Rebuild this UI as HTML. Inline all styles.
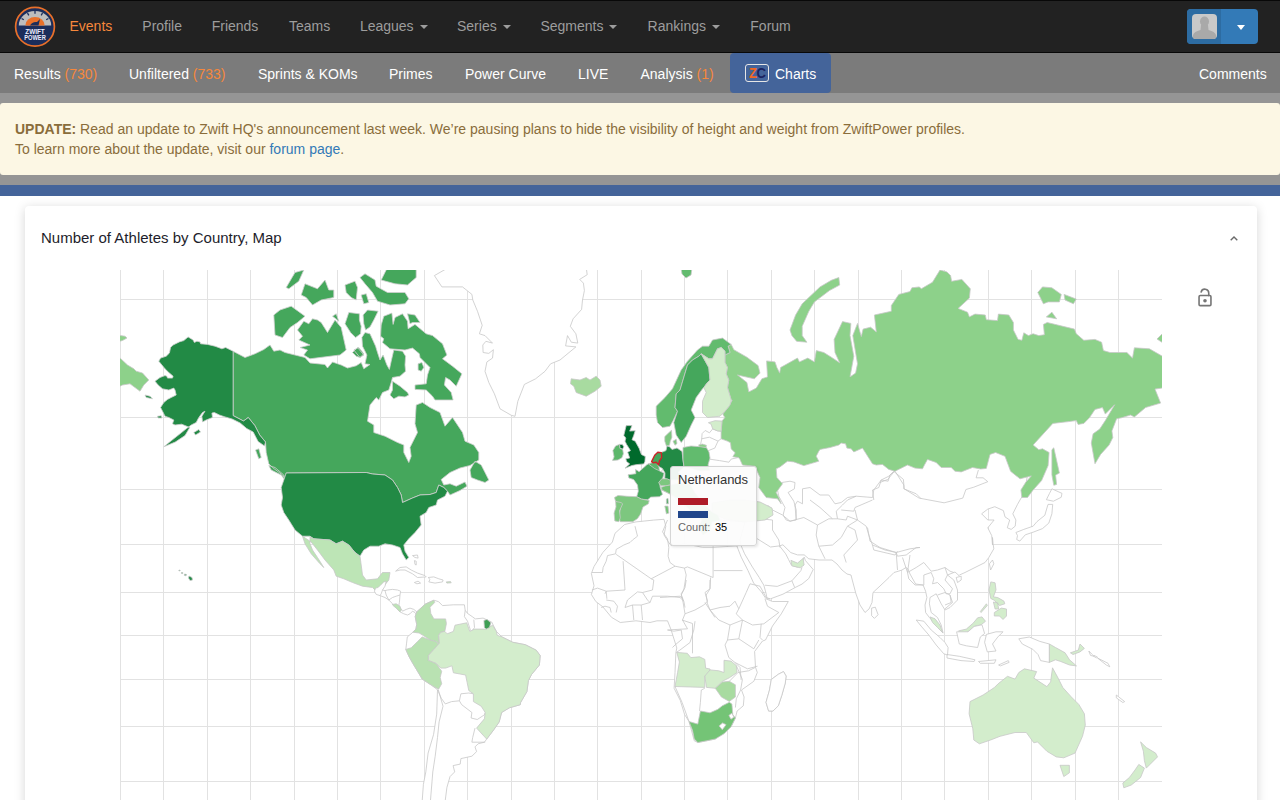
<!DOCTYPE html>
<html><head><meta charset="utf-8">
<style>
*{box-sizing:border-box;margin:0;padding:0}
html,body{width:1280px;height:800px;overflow:hidden;background:#fff;font-family:"Liberation Sans",sans-serif}
.abs{position:absolute;white-space:nowrap}
#nav{position:absolute;left:0;top:0;width:1280px;height:53px;background:#222;border-top:1px solid #080808;border-bottom:1px solid #080808}
.nl{position:absolute;top:17.6px;font-size:14px;line-height:17px;color:#9d9d9d}
.caret{display:inline-block;width:0;height:0;border-top:4px solid #9d9d9d;border-left:4px solid transparent;border-right:4px solid transparent;vertical-align:middle;margin-left:6px;position:relative;top:0px}
#sub{position:absolute;left:0;top:53px;width:1280px;height:40px;background:#7b7b7b}
.sl{position:absolute;top:65.5px;font-size:14px;line-height:17px;color:#fff}
.or{color:#f6883c}
#strip1{position:absolute;left:0;top:93px;width:1280px;height:92px;background:#959595}
#alert{position:absolute;left:0;top:103px;width:1280px;height:72px;background:#fcf7e4;border-radius:3px;color:#8a6d3b;font-size:14px;line-height:20px;padding:16px 15px}
#blue{position:absolute;left:0;top:185px;width:1280px;height:11px;background:#44649a}
#card{position:absolute;left:25px;top:206px;width:1232px;height:620px;background:#fff;border-radius:4px;box-shadow:0 2px 11px rgba(0,0,0,.17)}
</style></head><body>
<div id="nav">
 <svg class="abs" style="left:13px;top:4px" width="44" height="44" viewBox="0 0 44 44">
  <circle cx="22" cy="21.8" r="19.4" fill="#1b2d5b" stroke="#e8702a" stroke-width="1.7"/>
  <path d="M5.8 20.5 A16.2 14.5 0 0 1 38.2 20.5 Z" fill="#bdbdbd"/>
  <path d="M12.3 20.5 A9.7 8.5 0 0 1 31.7 20.5 Z" fill="#e8702a"/>
  <path d="M17 20.5 Q19 16.5 24 17 L27 14 L25.5 20.5 Z" fill="#1b2d5b"/>
  <g stroke="#1b2d5b" stroke-width="1.3"><path d="M22 6 V8.8"/><path d="M14.5 8 L15.8 10.4"/><path d="M29.5 8 L28.2 10.4"/><path d="M8.6 13.5 L10.8 14.8"/><path d="M35.4 13.5 L33.2 14.8"/></g>
  <text x="22" y="29.3" font-family="Liberation Sans" font-weight="bold" font-size="6.8" fill="#eef" text-anchor="middle" textLength="19.5" lengthAdjust="spacingAndGlyphs">ZWIFT</text>
  <text x="22" y="35" font-family="Liberation Sans" font-weight="bold" font-size="6.8" fill="#eef" text-anchor="middle" textLength="21.5" lengthAdjust="spacingAndGlyphs">POWER</text>
 </svg>
</div>
<div class="nl abs" style="left:69.5px;color:#f6883c">Events</div>
<div class="nl abs" style="left:142.3px">Profile</div>
<div class="nl abs" style="left:211.7px">Friends</div>
<div class="nl abs" style="left:289px">Teams</div>
<div class="nl abs" style="left:359.9px">Leagues<span class="caret"></span></div>
<div class="nl abs" style="left:457px">Series<span class="caret"></span></div>
<div class="nl abs" style="left:540.4px">Segments<span class="caret"></span></div>
<div class="nl abs" style="left:647.6px">Rankings<span class="caret"></span></div>
<div class="nl abs" style="left:750.3px">Forum</div>
<div class="abs" style="left:1187px;top:9px;width:71px;height:35px;background:#337ab7;border-radius:4px;overflow:hidden">
 <div class="abs" style="left:0;top:0;width:34px;height:35px;background:#2d6ca2"></div>
 <div class="abs" style="left:5px;top:5px;width:25px;height:25px;background:#c9c9c9;border-radius:4px;overflow:hidden">
  <svg width="25" height="25" viewBox="0 0 25 25"><ellipse cx="12.5" cy="7.5" rx="4.5" ry="5" fill="#a9a9a9"/><path d="M9 11 L16 11 L16.5 16 Q23 17.5 24 21 L24 25 L1 25 L1 21 Q2 17.5 8.5 16 Z" fill="#a9a9a9"/></svg>
 </div>
 <div class="abs" style="left:50px;top:16px;width:0;height:0;border-top:5px solid #fff;border-left:4.5px solid transparent;border-right:4.5px solid transparent"></div>
</div>
<div id="sub"></div>
<div class="sl abs" style="left:14px">Results <span class="or">(730)</span></div>
<div class="sl abs" style="left:129px">Unfiltered <span class="or">(733)</span></div>
<div class="sl abs" style="left:258px">Sprints &amp; KOMs</div>
<div class="sl abs" style="left:389px">Primes</div>
<div class="sl abs" style="left:465px">Power Curve</div>
<div class="sl abs" style="left:578px">LIVE</div>
<div class="sl abs" style="left:640.5px">Analysis <span class="or">(1)</span></div>
<div class="abs" style="left:730px;top:53px;width:101px;height:40px;background:#44649a;border-radius:4px"></div>
<div class="abs" style="left:745px;top:63.5px;width:24px;height:18.5px;border:1.3px solid #e6e6e6;border-radius:3px;background:#44649a"></div>
<div class="abs" style="left:748.5px;top:64px;font-size:15px;line-height:17px;font-weight:bold;letter-spacing:-0.5px;transform:scaleX(0.87);transform-origin:0 0"><span style="color:#f26722">Z</span><span style="color:#1b2360">C</span></div>
<div class="sl abs" style="left:775px">Charts</div>
<div class="sl abs" style="left:1199px">Comments</div>
<div id="strip1"></div>
<div id="alert"><b>UPDATE:</b> Read an update to Zwift HQ's announcement last week. We’re pausing plans to hide the visibility of height and weight from ZwiftPower profiles.<br>To learn more about the update, visit our <span style="color:#337ab7">forum page</span>.</div>
<div id="blue"></div>
<div id="card"></div>
<div class="abs" style="left:41px;top:229px;font-size:15px;line-height:17px;color:#1d1d2b">Number of Athletes by Country, Map</div>
<svg class="abs" style="left:1227.5px;top:232.5px" width="12" height="10" viewBox="0 0 12 10"><path d="M2.7 7.2 L6 3.9 L9.3 7.2" fill="none" stroke="#6a6a6a" stroke-width="1.4"/></svg>
<div id="map"><svg class="abs" style="left:0;top:0" width="1280" height="800" viewBox="0 0 1280 800"><defs><clipPath id="mc"><rect x="120" y="270" width="1042" height="530"/></clipPath></defs><g clip-path="url(#mc)">
<path d="M120.5 270V800 M163.5 270V800 M207.5 270V800 M250.5 270V800 M294.5 270V800 M337.5 270V800 M380.5 270V800 M424.5 270V800 M467.5 270V800 M511.5 270V800 M554.5 270V800 M597.5 270V800 M641.5 270V800 M684.5 270V800 M727.5 270V800 M771.5 270V800 M814.5 270V800 M858.5 270V800 M901.5 270V800 M944.5 270V800 M988.5 270V800 M1031.5 270V800 M1075.5 270V800 M1118.5 270V800 M120 299.5H1162 M120 417.5H1162 M120 489.5H1162 M120 544.5H1162 M120 592.5H1162 M120 635.5H1162 M120 679.5H1162 M120 726.5H1162 M120 781.5H1162" stroke="#e2e2e2" stroke-width="1" fill="none"/>
<path d="M233.0 351.2 245.0 357.5 255.0 353.8 263.8 349.5 270.0 345.0 273.8 351.2 280.0 350.0 285.0 352.5 295.0 355.0 305.0 357.5 310.0 363.0 325.0 364.5 327.5 368.0 332.5 362.0 341.2 365.0 347.5 368.0 356.2 365.8 361.2 362.5 363.8 368.8 370.0 364.5 365.0 363.8 366.9 355.0 362.5 346.2 361.9 337.5 365.0 332.5 370.0 333.8 375.6 346.2 377.5 352.5 380.0 360.0 383.1 355.0 386.9 365.0 389.4 369.4 391.2 361.2 393.8 350.0 402.5 351.2 405.6 356.2 405.0 365.0 405.6 371.2 400.0 376.2 392.5 377.5 391.2 382.5 388.8 390.0 382.5 392.5 378.8 400.0 376.2 397.5 370.0 405.0 367.5 421.2 373.8 425.0 373.8 432.5 385.0 436.2 397.5 442.5 403.8 445.0 403.8 452.5 408.8 462.5 411.2 456.2 410.0 447.5 417.5 432.5 415.0 423.8 416.2 405.0 422.5 402.5 430.0 407.5 440.0 412.5 445.0 426.2 452.5 417.5 462.5 432.5 465.0 441.2 473.8 445.0 478.8 452.5 478.8 460.0 478.8 460.0 470.0 465.5 460.0 468.0 450.0 472.5 441.2 479.5 443.8 485.0 450.0 483.8 456.2 486.2 465.0 482.0 467.0 486.2 460.0 490.5 450.0 495.0 447.5 491.2 443.8 487.5 438.8 485.0 436.2 492.5 430.0 494.5 420.0 495.0 412.5 498.0 402.5 502.5 401.2 495.0 397.5 487.5 392.5 480.0 385.0 475.0 372.5 474.0 366.2 472.5 286.2 473.0 286.2 480.0 282.5 475.0 272.5 467.5 268.8 463.8 266.2 452.5 265.5 442.0 259.7 435.0 254.8 425.5 248.3 417.5 243.5 421.0 233.1 415.5ZM381.2 325.0 383.8 316.2 391.9 313.1 393.1 324.4 395.0 317.5 402.5 313.8 407.5 321.2 408.1 328.8 415.0 324.4 426.2 333.8 432.5 335.6 442.5 343.8 446.9 355.0 442.5 358.8 452.5 366.2 461.9 373.8 456.2 386.2 450.0 380.0 445.6 377.5 444.4 385.0 451.2 392.5 453.1 400.0 435.0 400.0 432.5 396.2 426.2 390.0 415.0 389.4 415.0 385.0 426.2 383.8 427.5 375.0 430.0 367.5 420.0 357.5 419.4 353.8 412.5 348.1 405.0 350.0 390.0 348.8 382.5 342.5 383.8 338.8 380.6 336.2ZM392.5 381.2 400.0 386.2 407.5 392.5 408.8 395.0 405.0 396.9 398.8 396.2 393.8 398.8 390.0 395.0 392.5 390.0ZM418.1 363.8 421.9 362.5 423.8 367.5 421.2 371.2 418.1 370.0ZM345.0 323.8 348.8 312.5 359.4 313.8 359.4 320.0 361.2 326.2 360.6 333.8 355.6 337.5 350.6 332.5ZM363.1 315.0 367.5 310.0 378.1 311.2 373.8 320.0 370.0 326.9 365.6 330.0 363.8 323.8ZM352.5 352.5 357.5 347.5 363.8 355.0 360.0 357.5 356.2 356.2ZM407.5 313.8 415.0 315.0 420.0 322.5 412.5 322.5 410.0 323.8ZM286.2 287.5 295.0 272.5 303.8 270.0 298.8 281.2 288.8 288.8ZM301.2 295.0 305.0 283.8 317.5 288.8 325.0 280.0 328.8 290.0 333.8 290.0 333.8 297.5 321.2 300.0 312.5 305.0 306.2 297.5ZM345.0 285.0 355.0 281.2 357.5 287.5 356.2 300.0 351.2 297.5 346.2 292.5ZM360.0 277.5 365.0 273.8 375.0 280.0 376.2 286.2 387.5 292.5 405.0 292.5 408.8 298.8 405.0 303.8 390.0 305.0 377.5 301.2 372.5 292.5 365.0 283.8ZM361.2 295.0 366.2 293.8 368.8 302.5 363.8 303.8ZM381.2 280.0 386.2 270.0 383.8 260.0 416.2 260.0 416.2 277.5 407.5 285.0 395.0 283.8ZM280.0 310.0 291.2 306.2 305.0 316.2 297.5 322.5 290.0 327.5 282.5 337.5 275.0 335.0 273.8 315.0ZM297.5 330.0 303.8 321.2 308.8 323.8 312.5 318.8 317.5 320.0 321.2 322.5 327.5 332.5 335.0 320.0 341.2 327.5 346.2 350.0 340.0 355.0 320.0 357.5 310.0 358.8 303.8 355.0 307.5 350.0 300.0 347.5 310.0 345.0 298.8 340.0 302.5 336.2ZM332.5 316.2 336.2 313.8 338.8 321.2ZM353.8 350.0 358.8 347.5 363.8 353.8 360.0 357.5ZM268.8 465.5 275.0 467.5 283.8 475.0 285.0 480.0 281.2 475.0 271.2 470.0ZM255.5 450.0 258.8 448.8 261.2 457.5 258.8 458.8ZM470.0 470.0 475.0 461.2 481.2 465.0 485.0 472.5 488.8 480.0 485.0 482.5 477.5 480.0 471.2 477.5Z" fill="#45a75c" stroke="#cfcfcf" stroke-width="0.8" stroke-linejoin="round"/>
<path d="M434.4 275.6 447.5 268.1 586.3 268.1 587.2 274.7 579.7 279.4 583.4 283.1 584.4 290.6 582.5 300.0 581.6 309.4 573.1 318.8 570.3 326.3 575.9 333.8 577.8 343.1 571.3 342.2 567.5 335.6 565.6 345.9 575.9 346.9 560.0 360.0 550.6 363.8 545.0 371.3 535.6 378.8 524.4 384.4 517.8 401.3 515.0 416.3 511.3 415.3 500.0 408.8 494.4 393.8 488.8 382.5 485.0 371.3 486.9 361.9 492.5 358.1 493.4 349.7 488.8 353.4 483.1 352.5 482.8 345.0 485.9 341.3 492.5 343.1 485.0 335.6 479.4 333.8 482.2 325.3 477.5 311.3 472.8 300.0 471.9 294.4 462.5 286.9 441.9 286.9Z" fill="#ffffff" stroke="#c8c8c8" stroke-width="0.8" stroke-linejoin="round"/>
<path d="M286.2 473.0 366.2 472.5 372.5 474.0 385.0 475.0 392.5 480.0 397.5 487.5 401.2 495.0 402.5 502.5 412.5 498.0 420.0 495.0 430.0 494.5 436.2 492.5 438.8 485.0 443.8 487.5 447.5 491.2 445.0 496.2 437.5 500.0 436.2 505.0 428.8 507.5 426.2 512.5 420.0 516.2 421.2 525.0 415.0 532.5 408.8 538.8 403.8 545.0 405.0 551.2 408.8 557.5 406.2 560.0 402.5 553.8 400.0 547.5 392.5 545.0 385.0 543.8 378.8 546.2 370.0 546.2 363.8 550.0 360.0 556.2 355.0 552.5 348.8 545.0 342.5 541.2 336.2 543.8 330.0 540.0 313.8 538.8 310.0 536.2 302.5 536.2 295.0 530.0 288.8 520.0 283.8 512.5 281.2 505.0 282.5 497.5 281.2 487.5 283.8 480.0ZM188.1 336.9 193.1 340.0 194.4 342.5 196.9 341.2 200.0 341.9 200.6 343.8 207.5 344.4 215.0 346.2 221.9 348.8 225.6 347.5 233.1 351.2 233.1 415.6 243.5 421.0 248.3 417.5 254.8 425.5 259.7 435.0 265.5 442.0 264.5 446.0 258.1 441.5 253.2 432.0 246.7 428.5 240.2 423.0 232.1 419.0 225.0 416.9 219.4 415.0 214.4 412.5 211.9 413.1 212.5 417.5 206.2 420.0 202.5 421.9 201.9 416.2 205.0 411.2 202.5 412.5 198.8 417.5 196.2 422.5 191.2 425.0 186.2 428.8 180.0 433.8 171.2 440.8 163.8 446.8 175.2 442.1 185.0 435.6 189.8 427.5 181.7 424.2 175.0 425.0 172.5 423.8 173.8 420.0 168.8 417.5 165.0 416.2 162.5 411.2 160.6 407.5 163.8 402.5 167.5 399.4 171.2 397.5 176.2 395.0 175.0 390.0 173.8 388.1 168.8 390.0 162.5 388.8 158.1 385.0 155.0 381.2 160.0 377.5 165.0 375.6 166.9 376.2 167.5 378.1 172.5 378.1 173.1 376.2 168.8 372.5 165.0 368.8 161.9 365.0 158.8 361.2 160.6 358.1 166.2 356.2 169.4 353.1 170.6 347.5 173.1 345.0 179.4 341.9 183.8 340.6ZM157.5 416.2 161.2 415.8 162.0 418.0 158.0 418.0ZM145.0 395.0 150.0 396.2 152.5 398.8 146.2 397.5ZM193.8 432.5 198.8 429.5 200.5 432.0 195.5 435.0Z" fill="#228a45" stroke="#cfcfcf" stroke-width="0.8" stroke-linejoin="round"/>
<path d="M302.5 536.2 305.0 543.8 311.2 553.8 320.0 563.8 323.8 567.5 317.5 557.5 312.5 550.0 310.0 543.8 310.0 537.0 313.8 538.8 330.0 540.0 336.2 543.8 342.5 541.2 348.8 545.0 355.0 552.5 360.0 556.2 361.2 565.0 362.5 575.0 366.2 580.0 377.5 578.8 382.5 572.5 390.0 572.5 388.8 580.0 383.8 586.2 380.0 590.0 375.0 590.0 372.5 587.5 362.5 586.2 352.5 582.5 343.8 578.8 336.2 576.2 333.8 570.0 325.0 560.0 317.5 550.0 311.2 542.0Z" fill="#bde5b6" stroke="#c8c8c8" stroke-width="0.8" stroke-linejoin="round"/>
<path d="M120.0 358.0 127.5 365.0 133.8 368.8 136.2 371.2 142.5 373.0 148.8 380.0 143.8 385.0 140.0 391.2 135.0 387.5 130.0 383.8 122.5 385.0 120.0 386.2 115.0 386.2 115.0 358.0ZM120.0 335.5 125.0 336.2 127.0 338.0 122.5 340.5 120.0 341.2 115.0 341.2 115.0 335.5Z" fill="#8dd18a" stroke="#c8c8c8" stroke-width="0.8" stroke-linejoin="round"/>
<path d="M374.4 591.2 376.2 594.4 380.0 595.6 385.0 597.5 388.8 600.0 391.9 603.1 393.1 605.0 396.2 608.1 400.0 611.9 403.8 613.8 407.5 615.0 410.0 613.8 412.5 611.2 415.0 612.5 416.9 615.0 418.1 613.1 416.9 611.9 413.8 609.4 410.0 608.1 406.2 609.4 402.5 611.2 401.2 608.8 400.0 608.1 398.8 605.6 399.4 602.5 400.0 595.0 400.6 591.2 397.5 590.0 392.5 589.4 387.5 590.0 385.0 590.6 382.5 590.0 385.0 586.2 386.2 581.2 383.8 581.9 381.2 584.4 378.1 587.5 375.6 588.1Z" fill="#ffffff" stroke="#c8c8c8" stroke-width="0.8" stroke-linejoin="round"/>
<path d="M382.5 590.0 381.2 593.8 380.0 595.6M385.0 590.6 386.2 595.0 388.8 600.0M388.8 600.0 392.5 597.5 396.2 596.2 400.0 595.0" fill="none" stroke="#c8c8c8" stroke-width="0.8"/>
<path d="M392.5 604.4 396.2 603.8 400.0 606.2 401.2 610.0 400.0 611.9 396.2 608.1 393.1 605.6Z" fill="#bde5b6" stroke="#c8c8c8" stroke-width="0.8" stroke-linejoin="round"/>
<path d="M395.6 571.2 400.0 567.5 406.2 566.9 411.2 570.0 417.5 573.1 425.0 575.6 426.2 576.9 417.5 577.5 412.5 573.8 405.0 570.0 400.0 570.0ZM414.4 582.5 418.1 581.2 420.6 583.1 416.9 583.8ZM428.1 577.5 433.8 576.9 438.8 578.8 443.1 580.0 442.5 581.9 435.0 583.1 428.8 581.9 430.0 579.4ZM412.5 555.6 417.5 555.0 418.1 558.1 415.0 557.5ZM414.4 560.6 416.2 561.2 416.2 565.0 415.0 564.4Z" fill="#ffffff" stroke="#c8c8c8" stroke-width="0.8" stroke-linejoin="round"/>
<path d="M446.2 581.9 450.6 581.6 451.2 582.8 446.9 583.1Z" fill="#bde5b6" stroke="#c8c8c8" stroke-width="0.8" stroke-linejoin="round"/>
<path d="M416.7 611.9 425.3 604.1 433.9 600.2 438.6 601.7 442.5 605.6 453.4 604.8 464.4 604.8 465.2 610.3 467.5 613.4 472.2 616.6 475.3 618.9 483.1 618.1 491.7 622.0 496.4 631.4 501.9 636.9 512.8 642.3 525.3 644.7 536.2 650.2 540.2 655.6 539.4 665.0 531.6 674.4 528.4 680.6 526.9 691.6 520.6 702.5 520.3 704.7 509.4 707.8 501.6 712.5 499.2 721.9 493.8 729.7 486.7 739.1 484.4 742.2 478.1 743.8 475.0 746.9 476.6 751.6 471.9 756.2 460.9 758.6 460.2 764.1 453.1 765.6 454.7 771.9 450.0 776.6 446.9 787.5 445.3 800.0 445.3 804.7 421.9 804.7 423.4 784.4 425.8 771.9 428.1 753.1 433.6 734.4 436.7 714.1 437.5 689.8 431.6 685.3 422.2 679.1 417.5 671.2 412.8 663.4 408.9 656.4 405.8 649.4 406.6 643.1 407.3 636.9 412.0 633.0 412.8 632.2 415.9 629.1 416.7 624.4 415.2 616.6Z" fill="#ffffff" stroke="#c8c8c8" stroke-width="0.8" stroke-linejoin="round"/>
<path d="M465.2 610.3 464.4 616.6 467.5 621.2 470.6 630.6M473.8 619.7 474.5 627.5 472.2 630.6M437.5 689.8 441.4 698.4 445.3 703.9 451.6 701.6 459.4 700.8 460.9 693.8 468.8 693.0 473.4 693.8M459.4 700.8 461.7 704.7 471.9 712.5 471.1 718.0 477.3 719.5 484.4 714.8 485.2 712.5M438.3 689.8 443.0 706.2 439.1 721.9 437.5 737.5 435.2 756.2 432.8 771.9 430.5 800.0M475.0 728.1 472.7 737.5 471.9 742.2 485.2 742.2" fill="none" stroke="#c8c8c8" stroke-width="0.8"/>
<path d="M416.7 611.9 425.3 604.1 433.9 600.2 434.7 602.5 430.0 607.2 430.8 613.4 433.9 618.9 445.6 618.9 446.4 623.6 444.8 631.4 440.9 632.2 438.6 635.3 439.4 644.7 436.2 641.6 430.0 640.0 423.0 635.3 419.1 633.0 412.8 632.2 415.9 629.1 416.7 624.4 415.2 616.6Z" fill="#b9e2b2" stroke="#c8c8c8" stroke-width="0.8" stroke-linejoin="round"/>
<path d="M405.8 649.4 411.2 647.8 417.5 641.6 422.2 636.9 430.0 640.0 436.2 641.6 438.6 644.7 433.9 649.4 428.4 655.6 428.4 660.3 436.2 663.4 439.4 668.1 441.7 671.2 440.2 677.5 441.7 683.8 438.6 689.2 431.6 685.3 422.2 679.1 417.5 671.2 412.8 663.4 408.9 656.4Z" fill="#b9e2b2" stroke="#c8c8c8" stroke-width="0.8" stroke-linejoin="round"/>
<path d="M438.6 635.3 440.9 632.2 444.8 631.4 447.2 633.8 453.4 631.4 455.0 625.2 466.7 622.8 469.8 631.4 474.5 629.1 483.1 629.1 486.2 629.1 492.5 625.2 496.4 631.4 497.2 635.3 501.9 636.9 512.8 642.3 525.3 644.7 536.2 650.2 540.2 655.6 539.4 665.0 531.6 674.4 528.4 680.6 526.9 691.6 520.6 702.5 520.3 704.7 509.4 707.8 501.6 712.5 499.2 721.9 493.8 729.7 486.7 739.1 476.6 728.1 484.4 718.8 485.2 712.5 481.2 706.2 473.4 701.6 473.4 693.8 468.8 690.6 467.2 682.8 465.6 675.0 453.4 672.8 451.9 665.8 445.6 668.1 440.9 668.1 436.2 663.4 428.4 660.3 428.4 655.6 433.9 649.4 439.4 643.1Z" fill="#d3edcc" stroke="#c8c8c8" stroke-width="0.8" stroke-linejoin="round"/>
<path d="M483.9 620.5 487.0 619.4 490.9 622.8 489.4 627.5 486.2 629.1 484.4 627.5Z" fill="#3f9f55" stroke="#c8c8c8" stroke-width="0.8" stroke-linejoin="round"/>
<path d="M701.7 439.1 702.1 433.6 705.2 430.5 709.5 432.8 712.7 428.9 717.7 430.9 721.2 431.2 740.0 410.0 800.0 425.0 900.0 440.0 1000.0 445.0 1030.0 462.0 1024.0 494.0 1020.6 498.9 1017.5 504.4 1012.8 513.8 1015.9 520.0 1015.2 526.2 1011.2 529.4 1007.3 527.8 1009.7 520.0 1005.0 516.9 1003.4 510.6 994.8 506.7 987.8 509.1 981.6 513.8 987.8 520.0 994.1 520.0 987.8 527.8 991.7 535.6 992.5 545.0 992.5 537.5 993.1 543.8 993.8 548.8 988.8 557.5 985.0 562.5 975.0 567.5 965.0 572.5 959.4 575.0 959.0 575.6 955.0 572.0 947.5 575.0 953.8 580.0 957.5 590.0 957.5 600.0 950.0 607.5 945.0 610.0 941.2 603.8 936.2 593.8 930.0 597.5 929.4 603.8 931.2 612.5 937.5 617.5 941.2 625.0 943.1 633.1 936.2 625.0 929.4 617.5 925.6 612.5 925.0 605.0 926.9 597.5 925.6 591.2 923.1 585.0 915.6 584.0 910.0 574.0 908.0 569.0 906.0 567.5 902.0 570.0 899.0 571.0 894.0 572.5 889.0 577.5 880.0 586.0 873.0 592.5 872.0 602.5 869.0 609.0 865.0 612.5 860.0 605.0 856.0 594.0 852.0 579.0 851.0 575.0 847.0 574.0 842.0 570.0 837.0 564.0 832.0 560.0 819.0 560.0 808.8 558.8 804.2 554.9 797.5 554.9 790.8 552.6 782.9 544.8 779.5 545.9 785.7 553.8 788.5 559.4 791.3 565.0 797.5 567.2 803.1 559.4 804.2 557.1 805.4 560.5 813.2 569.5 808.8 578.5 802.0 584.1 795.2 587.5 782.9 594.2 770.5 598.8 767.1 598.8 766.0 593.1 763.8 585.2 759.2 577.4 752.5 567.2 744.6 553.8 741.2 545.9 740.0 540.0 745.0 522.0 720.0 520.0 712.0 512.0 703.0 532.0 698.0 527.0 702.0 520.0 690.0 510.0 670.0 494.0 662.0 490.0 661.0 487.0 662.0 470.0 684.0 455.0 700.0 447.0Z" fill="#ffffff" stroke="#c8c8c8" stroke-width="0.8" stroke-linejoin="round"/>
<path d="M777.5 490.0 781.9 482.5 790.0 481.2 795.0 482.5 794.4 488.8 788.1 492.5 793.8 501.2 796.2 510.0 796.2 520.0 790.0 521.2 786.2 520.0 783.1 515.0 785.0 507.5 778.8 496.2Z" fill="#ffffff" stroke="#c8c8c8" stroke-width="0.8" stroke-linejoin="round"/>
<path d="M802.5 488.8 810.0 487.5 820.0 495.0 828.8 495.0 835.0 503.8 841.2 502.5 847.5 497.5 856.2 496.2 872.5 497.5 873.8 490.0 881.2 480.0 888.8 476.2 893.8 471.2M802.5 488.8 802.5 503.8 797.5 501.2 795.0 505.0 796.2 520.0M810.0 500.0 820.0 507.5 832.5 518.8 837.5 518.8M782.5 515.0 790.0 521.2 803.8 517.5 817.5 525.0 828.8 518.8 832.5 518.8M817.5 525.0 816.2 535.0 818.8 546.2 832.5 545.0 841.2 537.5 847.5 526.2 857.5 520.0 847.5 516.2 846.2 520.0 837.5 518.8M837.5 518.8 836.2 511.2 842.5 505.0 847.5 500.0 856.2 496.2M841.2 510.0 853.8 511.2 855.0 507.5 872.5 500.0M855.0 510.0 857.5 520.0 866.2 526.2 868.8 535.0 872.5 545.0 885.0 550.0 896.2 552.5 910.0 548.8 920.0 547.5M818.8 546.2 825.0 558.8M847.5 526.2 855.0 530.0 857.5 540.0 843.8 555.0 846.2 562.5M872.5 545.0 873.8 550.0 895.0 555.0 897.5 551.2M895.0 471.2 903.8 485.0 903.8 488.8 916.2 493.8 921.2 498.8M760.0 518.8 772.5 520.0 772.5 530.0 778.8 540.0 780.0 547.5M767.5 505.0 772.5 510.0 782.5 515.0M895.0 471.2 890.0 475.0 888.1 481.2 881.2 480.0 878.8 487.5 872.5 490.0 873.8 500.0M764.9 585.2 777.2 586.4 791.9 580.8 794.7 587.5M791.9 580.8 800.9 570.6 802.0 567.2M757.0 538.6 770.5 547.0 779.5 545.9M867.5 527.5 870.0 541.2 880.0 547.5 896.2 552.5 897.5 556.2 906.2 555.0 916.2 547.5 920.0 547.5M896.2 552.5 897.5 570.0M902.5 557.5 907.5 572.5M880.0 482.5 887.8 479.4 894.1 471.6 903.4 479.4 904.2 488.8 919.1 498.1 944.1 502.8 962.8 498.1 965.9 489.5 973.8 487.2 987.8 481.7 983.1 477.8 976.1 477.8 978.4 470.0M907.5 572.5 916.2 567.5 923.8 562.5 931.2 571.2 937.5 570.0 945.0 567.5 950.0 571.2 953.8 572.5M923.8 585.0 923.8 575.0 931.2 572.5M931.2 572.5 933.8 578.8 932.5 583.8 937.5 582.5 943.8 588.8 946.2 593.8 950.0 593.8 952.5 588.8 945.0 580.0 947.5 575.0 945.0 567.5M937.5 595.0 945.0 592.5 950.0 595.0 951.2 602.5 945.0 605.0M950.0 595.0 952.5 602.5 945.0 608.8M910.0 555.0 907.5 572.5 908.8 578.8 915.0 585.0 923.8 585.0" fill="none" stroke="#c8c8c8" stroke-width="0.8"/>
<path d="M624.6 524.5 636.0 521.9 653.5 520.1 664.0 519.3 665.8 526.3 664.0 535.0 668.4 542.0 671.0 545.5 685.0 543.8 702.5 547.3 713.0 547.3 737.5 545.9 736.8 545.9 741.2 557.1 748.0 570.6 753.6 583.0 761.5 592.0 766.0 598.8 772.5 601.5 788.3 601.5 781.3 613.8 772.5 626.0 765.5 640.0 762.5 641.0 754.6 651.5 755.5 667.3 757.3 672.5 753.8 681.3 741.5 690.0 744.1 697.0 743.3 705.8 737.1 711.0 735.4 718.0 731.0 726.8 715.3 739.0 697.8 742.5 694.3 740.8 689.0 721.5 684.6 714.5 680.3 700.5 674.1 688.3 675.0 672.5 675.9 652.4 676.8 648.0 671.0 629.5 667.5 620.8 657.0 620.8 650.0 622.5 636.0 620.8 620.3 622.5 611.5 617.3 602.8 606.8 595.8 601.5 591.4 594.5 594.0 585.8 591.4 573.5 594.0 566.5 602.8 552.5 612.4 542.0 615.0 533.3ZM766.0 702.3 769.5 690.0 771.3 679.5 778.3 674.3 783.5 671.6 786.1 676.0 785.3 683.0 781.8 695.3 778.3 705.8 773.0 711.0 768.6 711.0Z" fill="#ffffff" stroke="#c8c8c8" stroke-width="0.8" stroke-linejoin="round"/>
<path d="M635.0 526.2 637.5 536.2 632.5 540.0 630.0 542.5 623.8 545.0 616.2 549.4 615.6 553.8 607.5 555.6 606.2 561.2 603.1 567.5 602.5 572.5 591.9 572.5M616.2 554.4 651.2 578.8 675.0 566.2M623.1 561.2 625.0 590.0 606.2 591.2 605.0 593.8M591.9 590.0 597.5 588.1 606.2 591.2 606.9 598.8M667.5 520.0 662.5 531.9 667.5 538.8 668.8 547.5 668.1 556.2 670.0 562.5 675.0 566.2M651.2 578.8 653.8 580.0 652.5 590.0 642.5 592.5M675.0 566.2 684.4 568.1 687.5 566.9 713.1 577.5M684.4 568.1 686.2 575.0 683.8 590.0 681.2 595.0 683.8 601.2 685.0 607.5M713.1 546.2 713.1 577.5M713.8 570.6 742.5 570.6M710.6 577.5 710.0 588.8 706.2 595.0 707.5 603.8 710.0 610.0 715.0 617.5M642.5 592.5 637.5 591.9 627.5 600.0 625.0 607.5M642.5 592.5 647.5 600.0 650.0 602.5M650.0 602.5 652.5 596.2 667.5 596.2 680.0 597.5 683.8 601.2M606.2 600.0 613.8 601.2 617.5 606.2 616.2 612.5M601.2 607.5 605.0 606.2 610.0 607.5 611.2 612.5M632.5 605.0 633.8 620.0M641.2 605.0 642.5 620.0M625.0 607.5 632.5 605.0 641.2 605.0 650.0 602.5M686.2 580.0 685.0 587.5 681.2 593.8 683.1 602.5 685.0 613.8M660.0 597.5 670.0 596.9 680.0 596.2 683.1 598.8M685.0 613.8 695.0 610.0 703.8 605.0 707.5 601.2 705.0 592.5 710.0 588.8 710.0 580.0M705.0 602.5 710.0 610.0 718.8 620.0 730.0 625.0M710.0 610.0 720.0 607.5 730.0 606.2 735.0 601.2 738.8 608.8 736.2 613.8 742.5 620.0 730.0 625.0M738.8 608.8 746.2 592.5 750.0 583.8M742.5 620.0 752.5 625.0 763.8 623.8 778.8 612.5M750.0 583.8 760.0 586.2 766.2 597.5 770.0 598.8M765.0 598.8 767.5 606.2 778.8 612.5M761.2 623.8 760.0 637.5 762.5 640.0M742.5 620.0 738.8 638.8 753.8 648.8 758.8 640.0M730.0 625.0 727.5 640.0 738.8 638.8M695.0 621.2 693.8 630.0 690.0 642.5 680.0 650.0 676.2 652.5M685.0 613.8 682.5 620.0 687.5 628.8 667.5 630.0M727.5 640.0 725.0 645.0 728.8 657.5 735.0 662.5 747.5 668.8 757.5 666.2M667.5 630.0 673.8 631.2 681.2 630.0 682.5 638.8 675.0 645.0 672.5 647.5M735.0 662.5 740.0 667.5 741.2 680.0M692.5 653.3 692.5 623.5 682.0 620.0M704.8 688.3 701.3 690.0 700.4 702.3 699.5 711.0M736.3 665.5 742.4 679.5 740.6 690.0 736.3 698.8 735.4 707.5M729.3 681.3 738.0 672.5 748.5 670.8 755.5 667.3M675.0 686.5 682.0 702.3 689.0 721.5" fill="none" stroke="#c8c8c8" stroke-width="0.8"/>
<path d="M766.0 702.3 769.5 690.0 771.3 679.5 778.3 674.3 783.5 671.6 786.1 676.0 785.3 683.0 781.8 695.3 778.3 705.8 773.0 711.0 768.6 711.0Z" fill="#ffffff" stroke="#c8c8c8" stroke-width="0.8" stroke-linejoin="round"/>
<path d="M676.8 652.4 687.3 653.3 690.8 657.6 699.5 656.8 704.8 659.4 705.6 668.1 710.0 669.0 709.1 674.3 704.8 676.0 704.8 687.4 675.0 686.5 677.6 672.5 679.4 662.0Z" fill="#d3edcc" stroke="#c8c8c8" stroke-width="0.8" stroke-linejoin="round"/>
<path d="M704.8 676.0 710.0 669.9 718.8 670.8 724.0 672.5 724.0 660.3 731.0 661.1 736.3 665.5 737.1 672.5 729.3 677.8 722.3 681.3 715.3 688.3 706.5 687.4Z" fill="#d3edcc" stroke="#c8c8c8" stroke-width="0.8" stroke-linejoin="round"/>
<path d="M715.3 688.3 722.3 682.1 729.3 681.3 735.4 684.8 735.4 697.0 729.3 701.4 721.4 697.0Z" fill="#a8dba0" stroke="#c8c8c8" stroke-width="0.8" stroke-linejoin="round"/>
<path d="M689.0 721.5 697.8 724.1 700.4 711.0 710.0 712.8 717.9 709.3 722.3 705.8 729.3 702.3 731.9 704.0 732.8 714.5 735.4 718.0 731.0 726.8 724.0 733.8 715.3 739.0 706.5 740.8 697.8 742.5 694.3 739.0 692.5 730.3Z" fill="#74c476" stroke="#c8c8c8" stroke-width="0.8" stroke-linejoin="round"/>
<path d="M719.1 725.9 722.6 722.9 726.1 724.7 722.3 729.7ZM728.9 715.4 731.7 713.3 734.0 717.1 731.0 719.2Z" fill="#ffffff" stroke="#c8c8c8" stroke-width="0.8" stroke-linejoin="round"/>
<path d="M790.9 560.3 797.5 563.1 803.1 558.4 804.1 565.0 800.3 567.8 791.9 565.9Z" fill="#d3edcc" stroke="#c8c8c8" stroke-width="0.8" stroke-linejoin="round"/>
<path d="M712.0 503.0 730.0 500.0 745.0 500.0 760.0 502.0 772.0 508.0 773.0 515.0 765.0 520.0 745.0 522.0 725.0 519.0 712.0 513.0Z" fill="#d3edcc" stroke="#c8c8c8" stroke-width="0.8" stroke-linejoin="round"/>
<path d="M871.6 608.1 875.3 607.2 878.1 614.7 874.4 618.4 871.6 615.6Z" fill="#ffffff" stroke="#c8c8c8" stroke-width="0.8" stroke-linejoin="round"/>
<path d="M1048.0 504.4 1052.7 504.4 1051.9 513.8 1048.8 523.1 1042.5 528.6 1033.1 532.2 1025.3 534.8 1019.8 541.1 1016.7 539.5 1017.5 535.6 1015.9 532.5 1023.8 529.4 1033.1 526.2 1037.0 521.6 1044.8 515.3ZM1051.9 488.8 1062.0 493.4 1061.2 497.3 1053.4 501.2 1046.4 499.7 1049.5 493.4ZM989.4 563.8 992.5 560.0 993.8 563.8 990.6 570.0ZM956.2 577.5 961.2 576.2 961.2 580.0 957.5 582.5Z" fill="#ffffff" stroke="#c8c8c8" stroke-width="0.8" stroke-linejoin="round"/>
<path d="M930.0 616.9 935.0 618.8 940.0 625.0 942.5 632.5 937.5 627.5 932.5 622.5ZM958.4 630.9 966.3 629.1 973.3 623.0 977.6 617.8 982.0 616.9 985.5 621.3 981.1 624.8 974.1 626.5 968.0 631.8 961.0 633.5Z" fill="#d3edcc" stroke="#c8c8c8" stroke-width="0.8" stroke-linejoin="round"/>
<path d="M989.0 589.8 990.8 581.9 995.1 582.8 996.0 589.8 993.4 596.8 997.8 597.6 1003.9 601.1 1004.8 603.8 999.5 605.5 994.3 600.3 990.8 598.5ZM994.3 612.5 1001.3 608.1 1006.5 609.0 1006.5 616.0 1003.0 619.5 999.5 616.0 994.3 616.0ZM993.4 602.0 997.8 602.9 998.6 609.0 995.1 609.0ZM980.3 611.6 986.4 603.8 987.3 605.5 981.1 612.5Z" fill="#d3edcc" stroke="#c8c8c8" stroke-width="0.8" stroke-linejoin="round"/>
<path d="M916.2 620.0 923.8 621.2 931.2 630.0 940.0 637.5 945.0 642.5 948.1 647.5 947.5 655.0 943.8 653.8 936.2 645.0 928.8 635.0 921.2 626.2ZM956.6 631.8 966.3 631.8 968.0 631.8 974.1 626.5 982.0 624.8 984.6 633.5 980.3 637.0 977.6 647.5 966.3 645.8 959.3 644.0ZM986.4 634.4 996.0 631.8 1003.0 631.8 997.8 637.0 992.5 644.0 996.0 651.0 987.3 651.9 984.6 642.3ZM947.0 654.5 959.3 656.3 975.0 659.8 974.1 661.5 961.0 660.6 947.0 658.0ZM978.5 661.5 996.0 659.8 994.3 663.3 980.3 663.3ZM998.6 665.0 1008.3 660.6 1009.1 662.4 1000.4 665.9ZM1018.8 638.8 1029.3 637.0 1039.8 641.4 1049.4 644.0 1049.4 662.4 1040.6 660.6 1038.0 654.5 1032.8 649.3 1022.3 644.0Z" fill="#ffffff" stroke="#c8c8c8" stroke-width="0.8" stroke-linejoin="round"/>
<path d="M1049.4 644.0 1055.5 647.5 1065.1 652.8 1069.5 659.8 1076.5 665.9 1069.5 665.0 1060.8 661.5 1055.5 659.8 1049.4 662.4ZM1070.4 652.8 1078.3 650.1 1080.0 644.0 1084.4 648.4 1080.0 651.9 1073.0 654.5Z" fill="#d3edcc" stroke="#c8c8c8" stroke-width="0.8" stroke-linejoin="round"/>
<path d="M1088.8 651.0 1092.3 654.5 1094.0 656.3 1090.5 655.4ZM1097.5 658.0 1108.0 663.3 1109.8 666.8 1106.3 665.0ZM1094.0 655.4 1097.5 657.1 1096.6 658.0 1093.7 656.3Z" fill="#ffffff" stroke="#c8c8c8" stroke-width="0.8" stroke-linejoin="round"/>
<path d="M970.0 701.6 983.1 695.0 994.4 687.5 998.1 683.8 1007.5 676.3 1015.0 679.1 1018.8 672.5 1024.4 668.8 1036.6 671.6 1033.8 678.1 1046.9 686.6 1050.6 681.9 1052.5 667.8 1058.1 678.1 1062.8 687.5 1071.3 696.9 1078.8 704.4 1084.4 713.8 1085.3 725.0 1082.5 736.3 1075.0 753.1 1063.8 757.8 1056.3 756.9 1046.9 751.3 1037.5 741.9 1033.8 742.8 1026.3 732.5 1015.0 732.5 1000.0 736.3 990.6 740.0 979.4 743.8 973.8 740.0 972.8 728.8 969.1 713.8ZM1060.0 765.3 1069.4 765.3 1069.4 772.8 1063.8 776.6Z" fill="#d3edcc" stroke="#c8c8c8" stroke-width="0.8" stroke-linejoin="round"/>
<path d="M1140.6 741.9 1146.3 747.5 1155.6 753.1 1157.5 756.9 1150.0 764.4 1146.3 768.1 1144.4 760.6 1143.4 751.3ZM1138.8 764.4 1144.4 768.1 1140.6 777.5 1131.3 785.0 1123.8 787.8 1122.8 783.1 1129.4 777.5 1135.0 770.0Z" fill="#d3edcc" stroke="#c8c8c8" stroke-width="0.8" stroke-linejoin="round"/>
<path d="M1116.3 695.0 1124.7 701.6 1122.8 702.5 1116.3 697.8Z" fill="#ffffff" stroke="#c8c8c8" stroke-width="0.8" stroke-linejoin="round"/>
<path d="M731.2 400.0 727.5 387.5 728.8 380.0 726.2 373.8 727.5 367.5 725.0 362.5 725.0 355.0 730.0 352.5 728.1 346.2 731.2 344.4 733.8 349.7 746.9 357.2 758.1 365.6 760.0 373.1 754.4 378.8 737.5 375.0 746.9 382.5 748.8 391.9 756.3 388.1 761.9 378.8 767.5 376.9 766.6 360.9 775.0 361.9 776.9 367.5 779.7 373.1 780.6 367.5 797.5 358.1 799.4 361.9 807.8 358.1 814.4 361.9 816.3 350.6 823.8 352.5 831.3 357.2 839.7 362.8 835.0 352.5 834.1 339.4 842.5 321.6 850.9 323.4 850.0 335.6 853.8 356.3 850.0 376.9 855.6 373.1 857.5 363.8 852.8 335.6 857.5 323.4 861.3 336.6 863.1 329.1 870.6 327.2 876.3 331.9 874.4 315.0 891.3 311.3 891.3 305.6 898.8 294.4 910.0 291.6 911.9 287.8 919.4 286.9 921.3 288.8 932.5 282.2 940.0 270.0 946.9 271.9 950.6 275.6 951.6 281.3 961.9 279.4 970.3 288.8 969.4 298.1 958.1 308.4 967.5 312.2 969.4 316.9 975.0 314.1 985.3 315.0 986.3 319.7 997.5 320.6 998.4 314.1 1008.8 315.0 1013.4 322.5 1013.4 330.0 1018.1 339.4 1021.9 340.3 1023.8 332.8 1028.4 335.6 1033.1 333.8 1038.8 335.6 1044.4 334.7 1043.4 324.4 1047.2 322.5 1074.4 329.1 1076.3 333.8 1083.8 340.3 1095.0 339.4 1101.6 342.2 1103.4 350.6 1110.0 352.5 1126.9 352.5 1132.5 358.1 1134.4 347.8 1149.4 348.8 1162.5 356.3 1173.8 356.3 1173.8 386.3 1155.0 389.1 1160.6 403.1 1145.6 407.5 1134.4 416.9 1130.6 415.0 1121.3 417.8 1116.6 418.8 1111.9 430.9 1112.8 437.5 1109.1 445.0 1100.6 454.4 1095.0 463.8 1091.3 443.1 1093.1 433.8 1099.7 429.1 1105.3 420.6 1114.7 404.7 1105.3 414.1 1102.5 407.5 1095.0 409.4 1089.4 417.8 1083.8 423.4 1078.1 424.4 1076.3 420.6 1068.8 421.6 1052.8 423.4 1033.1 445.0 1038.8 449.7 1042.5 448.8 1049.1 452.5 1048.1 465.6 1041.6 480.6 1033.1 490.0 1027.5 497.5 1021.9 497.5 1020.9 490.0 1025.6 482.5 1031.3 475.9 1020.0 478.8 1010.6 471.3 1005.0 456.3 995.6 452.5 990.0 454.4 986.3 468.4 980.6 469.0 972.5 467.5 961.2 471.9 955.0 471.2 951.2 467.5 941.2 467.5 936.2 462.5 927.5 459.4 924.4 465.0 922.5 468.8 915.0 468.1 907.5 465.0 895.0 471.2 888.8 469.4 882.5 464.4 876.2 465.0 872.5 463.8 862.5 448.1 853.8 451.9 851.2 448.8 846.9 448.1 845.6 443.8 841.2 443.1 838.8 445.0 830.0 447.5 820.0 449.4 818.8 451.2 816.2 456.2 818.8 461.2 812.5 463.1 803.8 465.6 793.8 461.9 787.5 461.2 780.0 466.9 776.2 468.8 776.9 477.5 782.5 483.8 776.2 492.5 778.8 497.5 781.2 503.8 777.5 498.8 766.2 497.5 758.8 487.5 760.0 477.5 755.0 466.2 742.5 465.0 739.8 459.1 738.3 457.5 732.8 456.7 735.2 452.8 731.2 448.9 730.5 442.7 727.3 441.1 721.1 438.8 721.1 431.0 722.0 421.0 724.8 417.6 722.8 414.0 729.0 406.2 732.2 400.0ZM790.0 330.0 795.6 315.0 802.2 303.8 820.0 286.9 831.3 280.3 838.8 277.5 839.7 285.0 829.4 290.6 814.4 301.9 808.8 311.3 802.2 326.3 802.2 335.6 806.9 342.2 796.6 341.3 791.9 335.6ZM1037.8 292.5 1042.5 286.9 1051.9 287.8 1061.3 294.4 1059.4 301.9 1048.1 301.9 1043.4 303.8ZM1064.1 294.4 1076.3 299.1 1073.4 303.8 1065.0 300.0ZM1046.3 316.9 1051.9 312.2 1056.6 318.8ZM1051.9 449.7 1053.8 447.8 1059.4 473.1 1055.6 475.0 1056.6 484.4 1053.8 485.3 1051.9 475.0ZM698.6 444.9 702.5 444.1 706.4 445.3 706.0 447.7 700.2 447.7Z" fill="#8dd18a" stroke="#c8c8c8" stroke-width="0.8" stroke-linejoin="round"/>
<path d="M656.2 406.2 665.0 397.5 672.5 388.8 681.2 370.0 687.5 361.2 697.5 350.0 702.5 346.2 708.8 346.2 712.5 340.0 722.5 338.1 731.2 344.4 728.1 346.2 730.0 352.5 725.0 355.0 725.0 351.2 721.2 347.5 717.5 348.8 712.5 358.8 708.8 358.8 701.2 353.8 698.8 356.2 692.5 360.0 687.5 365.0 680.0 390.0 676.2 393.8 675.0 407.5 677.5 411.2 673.1 420.6 670.0 426.2 662.5 427.5 657.5 422.5 656.2 415.0Z" fill="#62bb6e" stroke="#c8c8c8" stroke-width="0.8" stroke-linejoin="round"/>
<path d="M701.2 353.8 708.8 367.5 710.0 380.0 707.5 382.5 703.8 387.5 702.5 388.8 696.2 397.5 691.2 410.0 695.0 417.5 691.2 425.0 686.2 436.2 681.2 442.5 676.2 435.0 673.8 422.5 677.5 411.2 675.0 407.5 676.2 393.8 680.0 390.0 687.5 365.0 692.5 360.0 698.8 356.2Z" fill="#45a75c" stroke="#c8c8c8" stroke-width="0.8" stroke-linejoin="round"/>
<path d="M701.2 353.8 708.8 358.8 712.5 358.8 717.5 348.8 721.2 347.5 725.0 351.2 725.0 362.5 727.5 367.5 726.2 373.8 728.8 380.0 727.5 387.5 731.2 400.0 730.0 405.0 725.0 411.2 720.0 416.2 707.5 417.5 702.5 412.5 702.5 401.2 706.2 392.5 703.8 387.5 707.5 382.5 710.0 380.0 708.8 367.5Z" fill="#d3edcc" stroke="#c8c8c8" stroke-width="0.8" stroke-linejoin="round"/>
<path d="M708.4 422.7 715.0 420.7 722.0 421.1 721.2 431.2 717.7 430.9 712.7 428.9 711.1 424.2Z" fill="#d3edcc" stroke="#c8c8c8" stroke-width="0.8" stroke-linejoin="round"/>
<path d="M701.6 438.8 709.4 437.2 718.0 441.1M708.6 450.5 714.8 448.1 718.0 441.1 721.1 438.8M709.4 459.1 719.5 460.6 728.9 462.2 731.2 459.1 738.3 457.5M708.6 450.5 707.8 456.7 709.4 459.1" fill="none" stroke="#c8c8c8" stroke-width="0.8"/>
<path d="M664.8 436.6 668.8 432.7 671.5 430.3 671.9 437.3 670.3 441.2 669.5 445.2 666.4 445.9 664.8 441.2ZM673.0 441.2 676.2 439.3 677.0 443.6 675.0 445.2Z" fill="#7dc77f" stroke="#c8c8c8" stroke-width="0.8" stroke-linejoin="round"/>
<path d="M626.2 425.6 632.0 425.6 629.7 431.1 635.2 430.7 633.6 435.8 632.0 439.7 635.2 441.2 639.1 448.3 641.4 454.5 645.3 456.5 644.9 461.6 643.8 463.9 635.9 464.7 632.0 465.5 625.0 468.2 629.7 463.9 626.6 461.6 625.8 458.8 629.7 458.0 627.7 452.2 630.5 450.6 626.6 444.4 625.0 441.2 625.8 438.1 623.8 435.4ZM619.5 444.4 622.3 444.4 623.8 446.7 622.7 449.1 619.9 448.3Z" fill="#006a2c" stroke="#c8c8c8" stroke-width="0.8" stroke-linejoin="round"/>
<path d="M612.9 450.6 615.6 445.9 619.5 444.4 619.9 448.3 622.7 449.5 623.4 453.8 621.9 457.7 618.0 460.0 612.5 460.4 614.1 456.9Z" fill="#5cb76b" stroke="#c8c8c8" stroke-width="0.8" stroke-linejoin="round"/>
<path d="M648.0 463.9 652.3 462.7 656.2 462.3 658.6 464.7 659.4 470.2 657.8 472.5 654.7 471.7 650.0 467.8Z" fill="#5cb66b" stroke="#c8c8c8" stroke-width="0.8" stroke-linejoin="round"/>
<path d="M661.5 453.5 661.0 452.6 666.0 450.6 667.0 446.0 669.5 446.7 672.0 449.5 677.0 448.0 682.0 451.4 683.0 460.0 683.6 464.0 684.0 467.0 678.0 472.5 683.0 477.0 678.0 480.0 669.0 480.0 665.6 478.7 664.8 478.0 665.0 473.0 662.5 468.6 658.0 466.0 659.0 460.0 660.0 458.6Z" fill="#228a45" stroke="#c8c8c8" stroke-width="0.8" stroke-linejoin="round"/>
<path d="M683.0 447.5 691.0 446.0 700.0 446.7 706.5 447.7 709.0 452.0 710.0 458.0 708.0 465.0 710.0 470.5 700.0 471.0 690.0 468.0 684.0 467.0 683.6 464.0 683.0 460.0Z" fill="#62bb6e" stroke="#c8c8c8" stroke-width="0.8" stroke-linejoin="round"/>
<path d="M628.1 474.8 635.9 473.7 635.5 469.4 639.1 471.7 646.9 464.7 648.4 463.9 654.7 468.6 658.2 470.2 664.1 473.3 662.5 478.8 659.4 481.9 660.2 487.3 662.5 494.4 659.4 496.7 650.8 497.1 647.7 499.8 641.4 499.1 636.7 496.7 638.3 491.2 637.5 485.0 633.6 479.5 628.9 478.0ZM666.4 499.1 668.0 498.3 668.4 503.8 666.4 503.8Z" fill="#45a75c" stroke="#c8c8c8" stroke-width="0.8" stroke-linejoin="round"/>
<path d="M658.6 482.7 661.7 478.8 667.2 478.8 670.3 480.3 670.3 485.0 665.6 485.8 660.9 485.8Z" fill="#7dc77f" stroke="#c8c8c8" stroke-width="0.8" stroke-linejoin="round"/>
<path d="M661.3 487.3 665.6 485.8 670.3 485.0 678.1 483.4 690.0 484.0 695.0 493.0 705.0 505.0 712.0 512.0 718.0 515.0 720.0 520.0 712.0 522.0 710.0 530.0 703.0 535.0 698.0 527.0 702.0 520.0 690.0 510.0 680.0 500.0 670.0 494.0 662.0 490.0ZM664.8 506.1 668.0 506.1 668.8 513.1 666.4 513.9Z" fill="#74c476" stroke="#c8c8c8" stroke-width="0.8" stroke-linejoin="round"/>
<path d="M614.5 497.5 618.0 495.5 627.3 496.3 636.7 496.7 641.4 499.1 649.2 500.6 648.4 503.8 643.0 506.9 640.6 513.9 637.5 518.6 632.8 521.7 620.3 521.7 618.8 517.0 621.1 504.5 615.6 501.4Z" fill="#7dc77f" stroke="#c8c8c8" stroke-width="0.8" stroke-linejoin="round"/>
<path d="M615.6 501.4 621.1 502.6 622.7 503.8 619.5 510.8 620.3 517.8 618.8 521.7 614.8 520.9 614.1 513.1 616.0 506.9Z" fill="#7dc77f" stroke="#c8c8c8" stroke-width="0.8" stroke-linejoin="round"/>
<path d="M651.6 461.6 654.7 455.3 657.8 452.2 661.3 452.6 661.7 457.7 659.4 460.8 658.6 464.7 656.2 462.3 653.1 462.7Z" fill="#45a75c" stroke="#cc2229" stroke-width="1.4" stroke-linejoin="round"/>
<path d="M571.2 378.8 580.0 380.0 586.2 377.5 590.0 380.0 596.2 376.2 600.0 380.0 601.2 386.2 595.0 391.2 586.2 396.2 576.2 392.5 573.8 386.2 570.5 383.8Z" fill="#a8dba0" stroke="#c8c8c8" stroke-width="0.8" stroke-linejoin="round"/>
<path d="M681.0 268.0 692.0 268.0 691.0 275.0 686.0 278.0 682.0 274.0Z" fill="#62bb6e" stroke="#c8c8c8" stroke-width="0.8" stroke-linejoin="round"/>
<path d="M1157.0 339.0 1163.0 333.0 1163.0 343.0Z" fill="#8dd18a" stroke="#c8c8c8" stroke-width="0.8" stroke-linejoin="round"/>
<path d="M189.0 576.0 192.0 577.5 192.5 580.0 190.0 580.5 188.5 578.0ZM184.5 574.0 186.5 574.5 186.0 575.8 184.3 575.3ZM181.5 572.5 183.0 572.8 182.7 573.6 181.3 573.3ZM179.0 570.0 180.2 570.3 180.0 571.0 178.8 570.7Z" fill="#228a45" stroke="#c8c8c8" stroke-width="0.8" stroke-linejoin="round"/>
</g></svg></div><!--endmap-->
<div class="abs" style="left:670px;top:465.5px;width:86.5px;height:80px;background:rgba(252,252,252,0.94);border:1px solid #d6d6d6;border-radius:3px;box-shadow:1px 1px 3px rgba(0,0,0,0.12)"></div>
<div class="abs" style="left:678px;top:472px;font-size:13px;line-height:15px;color:#333">Netherlands</div>
<div class="abs" style="left:678px;top:498px;width:30px;height:7px;background:#ae1c28"></div>
<div class="abs" style="left:678px;top:511px;width:30px;height:7px;background:#21468b"></div>
<div class="abs" style="left:678px;top:521px;font-size:11px;line-height:13px;color:#666">Count: <span style="color:#222;margin-left:1.5px;color:#000">35</span></div>
<svg class="abs" style="left:1195px;top:286px" width="20" height="24" viewBox="0 0 20 24"><path d="M13.75 9.6 V7.1 A3.9 3.9 0 0 0 6.14 5.9" fill="none" stroke="#757575" stroke-width="1.6" stroke-linecap="round"/><rect x="4.05" y="9.55" width="11.9" height="10.05" rx="1.2" fill="none" stroke="#757575" stroke-width="1.6"/><circle cx="10" cy="14.75" r="1.8" fill="#757575"/></svg>
</body></html>
